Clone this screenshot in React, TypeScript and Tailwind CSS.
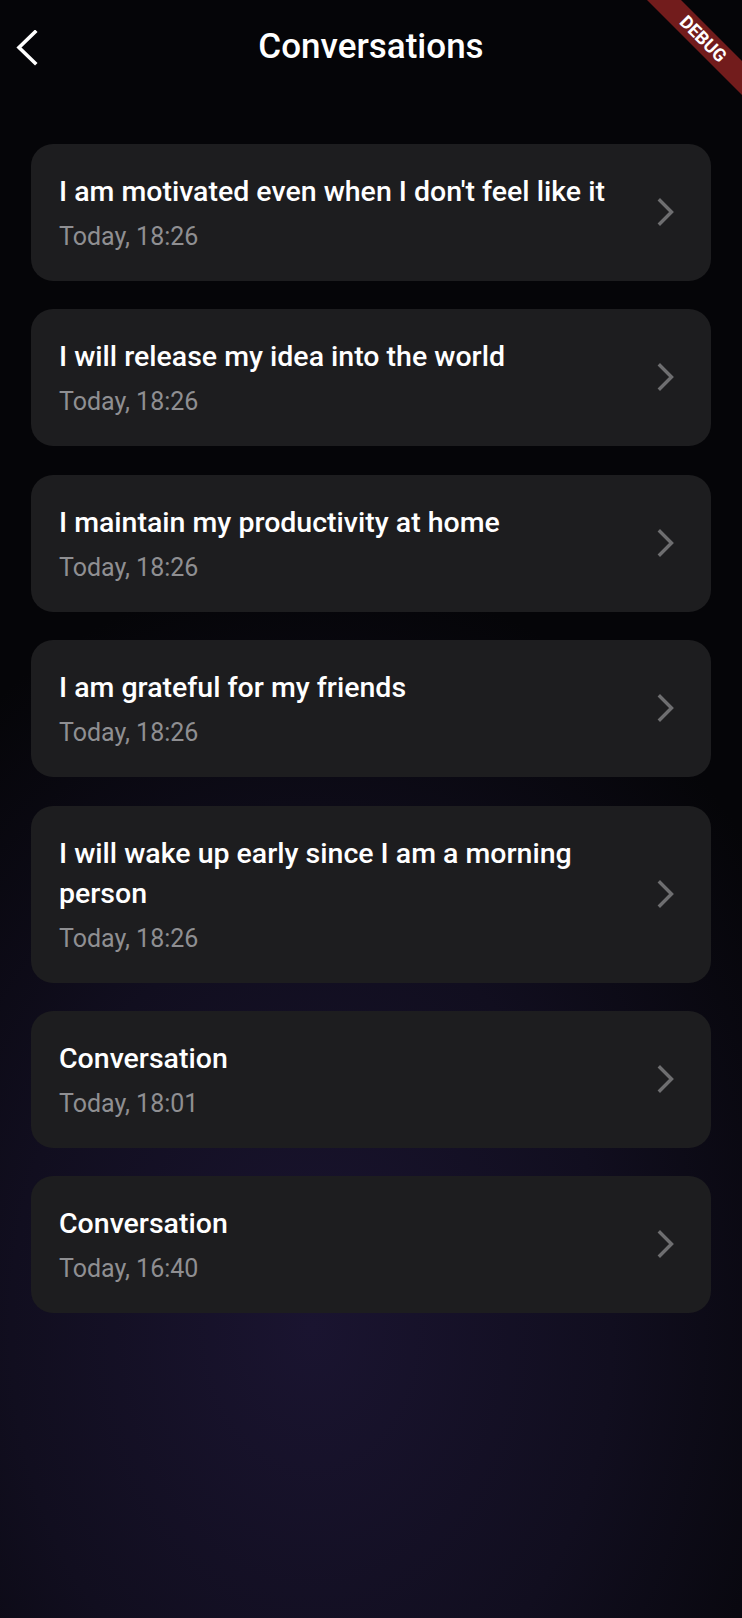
import React from "react";

const items = [
  { title: "I am motivated even when I don't feel like it", time: "Today, 18:26" },
  { title: "I will release my idea into the world", time: "Today, 18:26" },
  { title: "I maintain my productivity at home", time: "Today, 18:26" },
  { title: "I am grateful for my friends", time: "Today, 18:26" },
  { title: "I will wake up early since I am a morning person", time: "Today, 18:26" },
  { title: "Conversation", time: "Today, 18:01" },
  { title: "Conversation", time: "Today, 16:40" },
];

const ChevronRight = () => (
  <svg width="20" height="28" viewBox="0 0 20 28" fill="none">
    <path d="M3 2.5 L14.5 14 L3 25.5" stroke="#6e6e70" strokeWidth="3.4" strokeLinecap="square" />
  </svg>
);

const ChevronLeft = () => (
  <svg width="24" height="36" viewBox="0 0 24 36" fill="none">
    <path d="M19 2 L3 17.5 L19 33" stroke="#ffffff" strokeWidth="3.6" strokeLinecap="square" />
  </svg>
);

export default function App() {
  return (
    <div
      className="relative w-[742px] h-[1618px] overflow-hidden text-white bg-[radial-gradient(ellipse_90%_55%_at_42%_82%,#1a1430_0%,#110e1f_45%,#050508_85%)]"
      style={{ fontFamily: "Roboto, 'Noto Sans', sans-serif" }}
    >
      <div className="relative flex items-center justify-center h-[92px]">
        <button className="absolute left-[16px] top-[30px]">
          <ChevronLeft />
        </button>
        <h1 className="text-[35px] font-medium leading-none">Conversations</h1>
      </div>

      <div className="flex flex-col gap-[28.4px] px-[31px] pt-[52px]">
        {items.map((it, i) => (
          <div
            key={i}
            className="flex items-center justify-between rounded-[22px] bg-[#1d1d1f] pl-[28px] pr-[34px] pt-[28px] pb-[29px]"
          >
            <div className="flex flex-col flex-1 pr-[36px]">
              <p className="text-[28.5px] font-medium leading-[40px] text-white">{it.title}</p>
              <p className="mt-[10px] text-[25px] leading-[30px] text-[#8f8f92]">{it.time}</p>
            </div>
            <ChevronRight />
          </div>
        ))}
      </div>

      <div className="absolute right-0 top-0 w-[120px] h-[120px] overflow-hidden pointer-events-none">
        <div className="absolute left-[1px] top-[27px] w-[160px] h-[24px] rotate-45 bg-[#721c1c] flex items-center justify-center">
          <span className="text-[18px] font-bold text-white leading-none">DEBUG</span>
        </div>
      </div>
    </div>
  );
}
